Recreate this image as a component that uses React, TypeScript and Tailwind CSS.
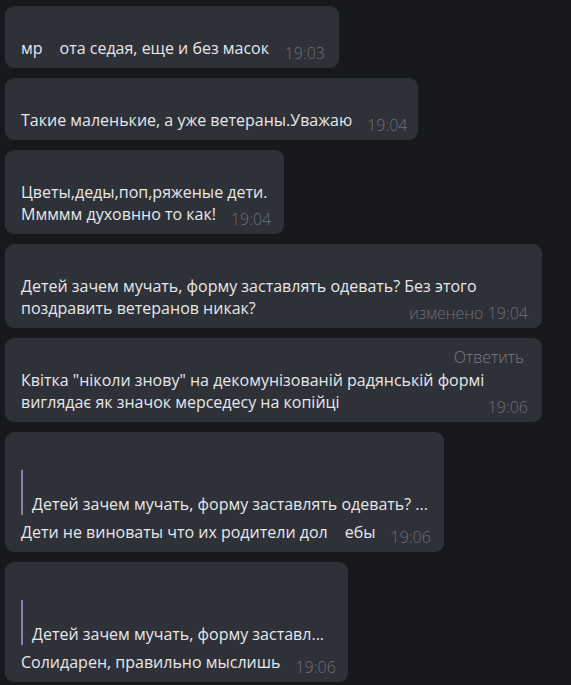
import React from 'react';

type BubbleProps = {
  width: string;
  children: React.ReactNode;
};

function Bubble({ width, children }: BubbleProps) {
  return (
    <div className={`ml-[5px] flex flex-col rounded-[9px] bg-[#2e3137] pb-[9px] pl-4 pr-[14px] pt-[31px] ${width}`}>
      {children}
    </div>
  );
}

function Time({ children }: { children: React.ReactNode }) {
  return (
    <span className="ml-auto shrink-0 translate-y-[5px] pl-[15px] text-[16px] font-light leading-[22px] text-[#6c7077]">
      {children}
    </span>
  );
}

function LastLine({ text, time }: { text: React.ReactNode; time: string }) {
  return (
    <div className="flex items-end">
      <span className="whitespace-nowrap">{text}</span>
      <Time>{time}</Time>
    </div>
  );
}

function Quote({ text }: { text: string }) {
  return (
    <div className="mb-[6px] mt-[7px] flex h-[45px] items-end border-l-2 border-[#8b7fb6] pl-[9px]">
      <span className="whitespace-nowrap text-[16px] leading-[22px]">{text}</span>
    </div>
  );
}

const Gap = ({ w }: { w: string }) => <span className={`inline-block ${w}`} />;

export default function App() {
  return (
    <div className="flex min-h-[685px] w-[571px] flex-col gap-[10px] overflow-hidden bg-[#18191d] pt-[6px] font-['Open_Sans',sans-serif] text-[16px] leading-[22px] text-[#e6e7ea]">
      <Bubble width="w-[334px]">
        <LastLine
          text={
            <>
              мр<Gap w="w-[17px]" />ота седая, еще и без масок
            </>
          }
          time="19:03"
        />
      </Bubble>

      <Bubble width="w-[413px]">
        <LastLine text="Такие маленькие, а уже ветераны.Уважаю" time="19:04" />
      </Bubble>

      <Bubble width="w-[279px]">
        <div className="whitespace-nowrap">Цветы,деды,поп,ряженые дети.</div>
        <LastLine text="Ммммм духовнно то как!" time="19:04" />
      </Bubble>

      <Bubble width="w-[537px]">
        <div className="whitespace-nowrap">Детей зачем мучать, форму заставлять одевать? Без этого</div>
        <LastLine text="поздравить ветеранов никак?" time="изменено 19:04" />
      </Bubble>

      <div className="relative">
        <Bubble width="w-[537px]">
          <div className="whitespace-nowrap">Квітка "ніколи знову" на декомунізованій радянській формі</div>
          <LastLine text="виглядає як значок мерседесу на копійці" time="19:06" />
        </Bubble>
        <span className="absolute right-[47px] top-[8px] text-[16px] font-light leading-[22px] text-[#7a7e86]">
          Ответить
        </span>
      </div>

      <Bubble width="w-[439px]">
        <Quote text="Детей зачем мучать, форму заставлять одевать? ..." />
        <LastLine
          text={
            <>
              Дети не виноваты что их родители дол<Gap w="w-[17px]" />ебы
            </>
          }
          time="19:06"
        />
      </Bubble>

      <Bubble width="w-[343px]">
        <Quote text="Детей зачем мучать, форму заставл..." />
        <LastLine text="Солидарен, правильно мыслишь" time="19:06" />
      </Bubble>
    </div>
  );
}
